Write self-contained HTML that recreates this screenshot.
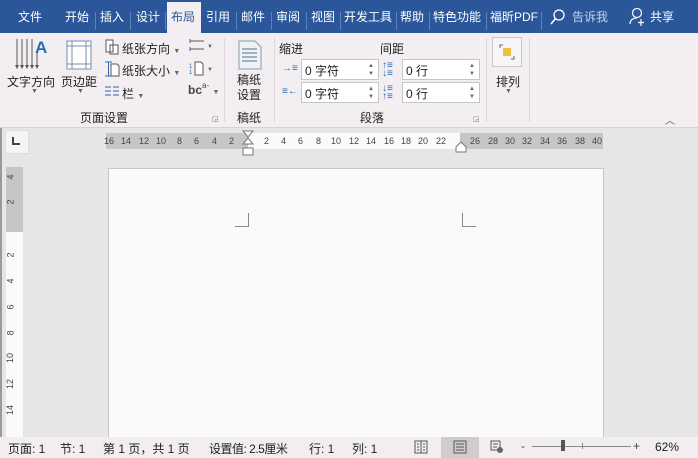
<!DOCTYPE html><html><head><meta charset="utf-8"><style>
*{margin:0;padding:0;box-sizing:border-box}
body{width:698px;height:458px;overflow:hidden;position:relative;background:#e6e6e6;font-family:"Liberation Sans","Noto Sans CJK SC",sans-serif;font-size:12px;color:#222}
.a{position:absolute;white-space:nowrap}
#top{left:0;top:0;width:698px;height:33px;background:#2b579a}
.t{position:absolute;top:8px;color:#fff;font-size:12px}
.sep{position:absolute;top:12px;width:1px;height:18px;background:#5a82bd}
#rib{left:0;top:33px;width:698px;height:95px;background:#f3eef2;border-bottom:1px solid #d6d2d5}
.gs{position:absolute;top:38px;width:1px;height:84px;background:#dcd6da}
.box{position:absolute;height:21px;background:#fff;border:1px solid #c6c6c6;font-size:12px;padding:2px 0 0 3px}
.box b{position:absolute;right:4px;font-weight:normal;font-size:6px;color:#666;line-height:7px}
.rn{position:absolute;top:136px;font-size:9px;color:#444}
.vn{position:absolute;left:8px;font-size:9px;color:#444;transform:rotate(-90deg)}
#st{left:0;top:437px;width:698px;height:21px;background:#f1edf0;font-size:12px}
.s{position:absolute;top:440px;font-size:12px}
</style></head><body>
<div id="top" class="a"></div>
<div class="t" style="left:18px">文件</div>
<div class="t" style="left:65px">开始</div><div class="sep" style="left:95px"></div>
<div class="t" style="left:100px">插入</div><div class="sep" style="left:130px"></div>
<div class="t" style="left:136px">设计</div><div class="sep" style="left:165px"></div>
<div class="a" style="left:167px;top:2px;width:34px;height:32px;background:#f3eef2"></div>
<div class="t" style="left:171px;color:#2b579a">布局</div>
<div class="t" style="left:206px">引用</div><div class="sep" style="left:236px"></div>
<div class="t" style="left:241px">邮件</div><div class="sep" style="left:271px"></div>
<div class="t" style="left:276px">审阅</div><div class="sep" style="left:306px"></div>
<div class="t" style="left:311px">视图</div><div class="sep" style="left:340px"></div>
<div class="t" style="left:344px">开发工具</div><div class="sep" style="left:396px"></div>
<div class="t" style="left:400px">帮助</div><div class="sep" style="left:429px"></div>
<div class="t" style="left:433px">特色功能</div><div class="sep" style="left:486px"></div>
<div class="t" style="left:490px">福昕PDF</div><div class="sep" style="left:541px"></div>
<svg class="a" style="left:549px;top:8px" width="18" height="18"><circle cx="10" cy="7" r="5" fill="none" stroke="#fff" stroke-width="1.3"/><path d="M6.5 10.5 2 16" stroke="#fff" stroke-width="1.5"/></svg>
<div class="t" style="left:572px;color:#c5d2e6">告诉我</div>
<svg class="a" style="left:629px;top:7px" width="18" height="20"><circle cx="8" cy="6" r="4.5" fill="none" stroke="#fff" stroke-width="1.2"/><path d="M1 17c0-4 3-6 7-6M12 12v7M9 15.5h6" stroke="#fff" stroke-width="1.2" fill="none"/></svg>
<div class="t" style="left:650px">共享</div>

<div id="rib" class="a"></div>
<svg class="a" style="left:14px;top:38px" width="36" height="34"><g stroke="#555" stroke-width="1"><path d="M3 1v28M8 1v28M13 1v28M18 1v28M23 14v15"/></g><g fill="#555"><path d="M1 27l2 4 2-4zM6 27l2 4 2-4zM11 27l2 4 2-4zM16 27l2 4 2-4zM21 27l2 4 2-4z"/></g><text x="21" y="15" font-size="17" font-weight="bold" fill="#2b6cb4" font-family="Liberation Sans">A</text></svg>
<div class="a" style="left:7px;top:73px">文字方向</div>
<div class="a" style="left:31px;top:88px;font-size:7px;color:#666">▼</div>
<svg class="a" style="left:66px;top:40px" width="26" height="30"><rect x="1" y="1" width="24" height="28" fill="#fff" stroke="#7a8ea8"/><path d="M6 1v28M20 1v28M1 6h24M1 24h24" stroke="#7a8ea8"/></svg>
<div class="a" style="left:61px;top:73px">页边距</div>
<div class="a" style="left:77px;top:88px;font-size:7px;color:#666">▼</div>
<svg class="a" style="left:104px;top:38px" width="16" height="18"><path d="M2 2h7v12H2z M6 7h8v9H6z" fill="#fff" stroke="#555"/></svg>
<div class="a" style="left:122px;top:40px">纸张方向 <span style="font-size:7px;color:#666">▼</span></div>
<svg class="a" style="left:104px;top:60px" width="16" height="18"><path d="M1 2h7M1 16h7M4.5 2v14" stroke="#2b6cb4"/><path d="M7 4h6l2 2v10H7z" fill="#fff" stroke="#555"/></svg>
<div class="a" style="left:122px;top:62px">纸张大小 <span style="font-size:7px;color:#666">▼</span></div>
<svg class="a" style="left:104px;top:84px" width="16" height="14"><path d="M1 3h6M1 7h6M1 11h6M9 3h6M9 7h6M9 11h6" stroke="#3a5fa8"/></svg>
<div class="a" style="left:122px;top:85px">栏 <span style="font-size:7px;color:#666">▼</span></div>
<svg class="a" style="left:188px;top:38px" width="28" height="14"><path d="M2 3h14M2 11h14" stroke="#555"/><path d="M2 1v4M2 9v4" stroke="#2b6cb4"/><text x="19" y="10" font-size="6" fill="#666">▼</text></svg>
<svg class="a" style="left:188px;top:60px" width="28" height="16"><text x="1" y="14" font-size="6" fill="#2b6cb4">1</text><text x="1" y="8" font-size="6" fill="#2b6cb4">1</text><path d="M7 2h6l2 2v11H7z" fill="#fff" stroke="#555"/><text x="19" y="11" font-size="6" fill="#666">▼</text></svg>
<div class="a" style="left:188px;top:83px;font-size:12px;color:#444;font-weight:bold">bc<span style="font-size:8px;position:relative;top:-6px;font-weight:normal">a-</span> <span style="font-size:7px;color:#666;font-weight:normal">▼</span></div>
<div class="a" style="left:80px;top:109px">页面设置</div>
<div class="a" style="left:212px;top:115px;font-size:7px;color:#777">◲</div>
<div class="gs" style="left:224px"></div>
<svg class="a" style="left:238px;top:40px" width="24" height="30"><path d="M1 1h16l6 6v22H1z" fill="#eef2f6" stroke="#8a9aaa"/><g fill="#9fb0c2"><rect x="4" y="8" width="15" height="2"/><rect x="4" y="12" width="15" height="2"/><rect x="4" y="16" width="15" height="2"/><rect x="4" y="20" width="15" height="2"/></g></svg>
<div class="a" style="left:237px;top:73px;line-height:15px">稿纸<br>设置</div>
<div class="a" style="left:237px;top:109px">稿纸</div>
<div class="gs" style="left:274px"></div>
<div class="a" style="left:279px;top:40px">缩进</div>
<div class="a" style="left:380px;top:40px">间距</div>
<div class="a" style="left:282px;top:63px;color:#2b6cb4;font-size:10px">→≡</div>
<div class="a" style="left:282px;top:86px;color:#2b6cb4;font-size:10px">≡←</div>
<div class="box" style="left:301px;top:59px;width:78px">0 字符<b style="top:3px">▲</b><b style="top:11px">▼</b></div>
<div class="box" style="left:301px;top:82px;width:78px">0 字符<b style="top:3px">▲</b><b style="top:11px">▼</b></div>
<div class="a" style="left:382px;top:62px;color:#2b6cb4;font-size:10px;line-height:8px">↑≡<br>↓≡</div>
<div class="a" style="left:382px;top:85px;color:#2b6cb4;font-size:10px;line-height:8px">↓≡<br>↑≡</div>
<div class="box" style="left:402px;top:59px;width:78px">0 行<b style="top:3px">▲</b><b style="top:11px">▼</b></div>
<div class="box" style="left:402px;top:82px;width:78px">0 行<b style="top:3px">▲</b><b style="top:11px">▼</b></div>
<div class="a" style="left:360px;top:109px">段落</div>
<div class="a" style="left:473px;top:115px;font-size:7px;color:#777">◲</div>
<div class="gs" style="left:486px"></div>
<div class="a" style="left:492px;top:37px;width:30px;height:30px;border:1px solid #c8c8c8;background:#f6f6f6"></div>
<svg class="a" style="left:497px;top:42px" width="20" height="20"><rect x="6" y="6" width="8" height="8" fill="#f0c040"/><path d="M3 6V3h3M17 14v3h-3" stroke="#666" fill="none"/></svg>
<div class="a" style="left:496px;top:73px">排列</div>
<div class="a" style="left:505px;top:88px;font-size:7px;color:#666">▼</div>
<div class="gs" style="left:529px"></div>
<div class="a" style="left:665px;top:112px;font-size:10px;color:#555">︿</div>

<div class="a" style="left:0;top:128px;width:2px;height:310px;background:#9a9a9a"></div>
<div class="a" style="left:5px;top:130px;width:24px;height:24px;background:#f5f5f5;border:1px solid #ddd"></div>
<div class="a" style="left:12px;top:137px;width:8px;height:8px;border-left:2px solid #444;border-bottom:2px solid #444"></div>
<div class="a" style="left:106px;top:133px;width:497px;height:16px;background:#c6c6c6"></div>
<div class="a" style="left:248px;top:133px;width:212px;height:16px;background:#fafafa"></div>
<div class="rn" style="left:104px">16</div><div class="rn" style="left:121px">14</div><div class="rn" style="left:139px">12</div><div class="rn" style="left:156px">10</div>
<div class="rn" style="left:177px">8</div><div class="rn" style="left:194px">6</div><div class="rn" style="left:212px">4</div><div class="rn" style="left:229px">2</div>
<div class="rn" style="left:264px">2</div><div class="rn" style="left:281px">4</div><div class="rn" style="left:298px">6</div><div class="rn" style="left:316px">8</div>
<div class="rn" style="left:331px">10</div><div class="rn" style="left:349px">12</div><div class="rn" style="left:366px">14</div><div class="rn" style="left:384px">16</div>
<div class="rn" style="left:401px">18</div><div class="rn" style="left:418px">20</div><div class="rn" style="left:436px">22</div>
<div class="rn" style="left:470px">26</div><div class="rn" style="left:488px">28</div><div class="rn" style="left:505px">30</div><div class="rn" style="left:522px">32</div>
<div class="rn" style="left:540px">34</div><div class="rn" style="left:557px">36</div><div class="rn" style="left:575px">38</div><div class="rn" style="left:592px">40</div>
<svg class="a" style="left:242px;top:130px" width="13" height="28"><path d="M1 1h10L6 7zM6 8l5 6H1z" fill="#fff" stroke="#777"/><rect x="1" y="18" width="10" height="7" fill="#fff" stroke="#777"/></svg>
<svg class="a" style="left:455px;top:141px" width="13" height="12"><path d="M6 1l5 5v5H1V6z" fill="#fff" stroke="#777"/></svg>
<div class="a" style="left:6px;top:167px;width:17px;height:270px;background:#fafafa"></div>
<div class="a" style="left:6px;top:167px;width:17px;height:65px;background:#c6c6c6"></div>
<div class="vn" style="top:172px">4</div><div class="vn" style="top:197px">2</div>
<div class="vn" style="top:250px">2</div><div class="vn" style="top:276px">4</div><div class="vn" style="top:302px">6</div><div class="vn" style="top:328px">8</div>
<div class="vn" style="top:353px;left:5px">10</div><div class="vn" style="top:379px;left:5px">12</div><div class="vn" style="top:405px;left:5px">14</div>
<div class="a" style="left:108px;top:168px;width:496px;height:270px;background:#fafafa;border:1px solid #c8c8c8"></div>
<div class="a" style="left:235px;top:213px;width:14px;height:14px;border-right:1px solid #888;border-bottom:1px solid #888"></div>
<div class="a" style="left:462px;top:213px;width:14px;height:14px;border-left:1px solid #888;border-bottom:1px solid #888"></div>
<div id="st" class="a"></div>
<div class="s" style="left:8px">页面: 1</div>
<div class="s" style="left:60px">节: 1</div>
<div class="s" style="left:103px">第 1 页，共 1 页</div>
<div class="s" style="left:209px;letter-spacing:-0.5px">设置值: 2.5厘米</div>
<div class="s" style="left:309px">行: 1</div>
<div class="s" style="left:352px">列: 1</div>
<div class="a" style="left:441px;top:437px;width:38px;height:21px;background:#cfcbce"></div>
<svg class="a" style="left:414px;top:440px" width="14" height="14"><path d="M1 1h12v12H1zM7 1v12M3 4h2M3 7h2M3 10h2M9 4h2M9 7h2M9 10h2" fill="none" stroke="#555"/></svg>
<svg class="a" style="left:453px;top:440px" width="14" height="14"><path d="M1 1h12v12H1zM3 4h8M3 7h8M3 10h8" fill="none" stroke="#555"/></svg>
<svg class="a" style="left:490px;top:440px" width="14" height="14"><path d="M1 1h9v9H1zM3 4h5M3 7h4" fill="none" stroke="#555"/><circle cx="10" cy="10" r="3" fill="#666"/></svg>
<div class="a" style="left:521px;top:439px;color:#444">-</div>
<div class="a" style="left:532px;top:446px;width:99px;height:1px;background:#888"></div>
<div class="a" style="left:582px;top:443px;width:1px;height:6px;background:#888"></div>
<div class="a" style="left:561px;top:440px;width:4px;height:11px;background:#555"></div>
<div class="a" style="left:633px;top:439px;color:#444">+</div>
<div class="a" style="left:655px;top:440px">62%</div>
</body></html>
